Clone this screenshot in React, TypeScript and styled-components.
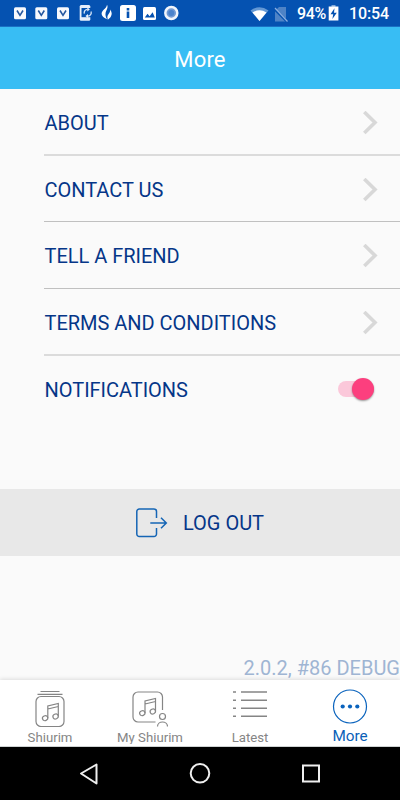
import React, { useState } from "react";
import styled, { createGlobalStyle } from "styled-components";

const Global = createGlobalStyle`
  * { box-sizing: border-box; }
  body { margin: 0; background: #fafafa; font-family: Roboto, sans-serif; }
  svg { display: block; flex: none; }
`;

const Screen = styled.div`
  width: 400px;
  height: 800px;
  display: flex;
  flex-direction: column;
  background: #fafafa;
  overflow: hidden;
`;

const StatusBar = styled.div`
  height: 27px;
  background: #0552b1;
  border-bottom: 1px solid #1a70c4;
  display: flex;
  align-items: center;
  justify-content: space-between;
  color: #fff;
`;

const StatusIcons = styled.div`
  height: 26px;
`;

const Readout = styled.div`
  display: flex;
  align-items: center;
  height: 26px;
  padding: 2px 11px 0 0;
  font-size: 16px;
  font-weight: 500;
  line-height: 26px;
`;

const Percent = styled.span`
  width: 32px;
  padding-left: 1px;
  letter-spacing: -0.3px;
  white-space: nowrap;
`;

const Clock = styled.span`
  width: 40px;
  white-space: nowrap;
  letter-spacing: -0.1px;
`;

const Header = styled.header`
  height: 62px;
  padding-top: 2px;
  background: #38bdf4;
  display: flex;
  align-items: center;
  justify-content: center;
  color: #fff;
  font-size: 22px;
  letter-spacing: 0.2px;
`;

const Menu = styled.ul`
  list-style: none;
  margin: 0;
  padding: 0 0 0 44px;
  height: 400px;
`;

const MenuRow = styled.li<{ $height: number; $line: number }>`
  height: ${(p) => p.$height}px;
  border-bottom: ${(p) => p.$line}px solid ${(p) => (p.$line === 2 ? "#dbdbdb" : "#c0c0c0")};
  display: flex;
  justify-content: space-between;
  padding: 22px 22px 0 0.5px;
`;

const Label = styled.span`
  color: #053688;
  font-size: 20px;
  line-height: 24px;
  letter-spacing: -0.02px;
  white-space: nowrap;
`;

const Toggle = styled.button<{ $on: boolean }>`
  width: 36px;
  height: 16px;
  margin: 3px 4px 0 0;
  padding: 0;
  border: 0;
  border-radius: 8px;
  background: ${(p) => (p.$on ? "#fbc8da" : "#c4c4c4")};
  display: flex;
  align-items: center;
  justify-content: ${(p) => (p.$on ? "flex-end" : "flex-start")};
`;

const Knob = styled.span<{ $on: boolean }>`
  flex: none;
  width: 22px;
  height: 22px;
  border-radius: 50%;
  background: ${(p) => (p.$on ? "#fc3f7e" : "#f1f1f1")};
  box-shadow: 0 1px 2px rgba(0, 0, 0, 0.4);
`;

const LogOut = styled.button`
  width: 100%;
  height: 67px;
  border: 0;
  padding: 0 0 0 136px;
  background: #e8e8e8;
  font-family: inherit;
  display: flex;
  align-items: center;
  gap: 15px;
`;

const Version = styled.div`
  flex: 1;
  display: flex;
  align-items: flex-end;
  justify-content: flex-end;
  color: #9fb5d3;
  font-size: 20px;
  line-height: 24px;
  white-space: nowrap;
`;

const TabBar = styled.nav`
  height: 67px;
  background: #fff;
  border-bottom: 1px solid #cfd3d3;
  box-shadow: 0 -1px 4px rgba(0, 0, 0, 0.12);
  display: grid;
  grid-template-columns: repeat(4, 100px);
`;

const Tab = styled.div`
  display: flex;
  flex-direction: column;
  align-items: center;
  padding-top: 4px;
  height: 64px;
  overflow: hidden;
`;

const TabName = styled.span<{ $active?: boolean }>`
  margin-top: ${(p) => (p.$active ? -1 : 5)}px;
  color: ${(p) => (p.$active ? "#0a5fb8" : "#858585")};
  font-size: ${(p) => (p.$active ? 15.3 : 13.2)}px;
  line-height: ${(p) => (p.$active ? 20 : 12)}px;
  white-space: nowrap;
`;

const NavBar = styled.div`
  height: 53px;
  background: #000;
  display: flex;
  justify-content: center;
`;

const Chevron = () => (
  <svg width="16" height="24" viewBox="0 0 16 24" fill="none" stroke="#d8d8d8" strokeWidth="3.6">
    <path d="M2.3 1 L13 11.500 L2.3 22" />
  </svg>
);

const Notes = () => (
  <>
    <path d="M9.5 23V11L20 8.5V21M9.5 14L20 11.5" />
    <ellipse cx="6.8" cy="23.2" rx="2.7" ry="2.4" transform="rotate(-25 6.8 23.2)" />
    <ellipse cx="17.3" cy="21.5" rx="2.7" ry="2.4" transform="rotate(-25 17.3 21.5)" />
  </>
);

const Notifications = () => (
  <svg width="185" height="26" viewBox="0 0 185 26">
    {[14, 35.3, 57].map((x) => (
      <g key={x}>
        <rect x={x} y="7.2" width="12" height="12" rx="1.5" fill="#f7f9fd" />
        <path d={`M${x + 3} 10.5l3 4.8 3-4.8`} fill="none" stroke="#25579f" strokeWidth="1.6" />
      </g>
    ))}
    <rect x="79.700" y="5" width="10.600" height="15.700" rx="1.500" fill="#e8effa" />
    <path d="M81.500 8h10v9.200h-10z" fill="#0552b1" />
    <path d="M84.300 13.600a3.400 3.400 0 0 1 3.200-4.300M91 11.400a3.400 3.400 0 0 1-3.200 4.700" fill="none" stroke="#d8e6f8" strokeWidth="1.300" />
    <path d="M87.300 7.300l2.500 2.100-2.500 2.100zM88 14l-2.500 2.100 2.500 2.100z" fill="#e8effa" />
    <path d="M107 4.800c1.600 3-.8 5.200-1.400 8-.4 2.300.1 4.400 1.500 6.500-4.200-1.800-6.400-4.300-5.100-7.200 1.200-2.500 4.500-3.800 5-7.300z" fill="#fff" />
    <path d="M110.100 9.600c2 2.700 2 4.800.8 6.800-.7 1.300-2 2.200-3.100 3.300-.8-2.800-.4-4.200.8-5.700 1.100-1.300 1.700-2.500 1.500-4.400z" fill="#fff" />
    <rect x="120" y="5" width="16" height="16" rx="2.500" fill="#fff" />
    <path d="M126.700 8h2.600v2.400h-2.600zM126.700 11.600h2.600v6.500h-2.600z" fill="#0552b1" />
    <rect x="143" y="7" width="13" height="13" rx="1.500" fill="#fff" />
    <path d="M144.800 17.500l2.700-3.700 2.100 2.400 3-4 2.200 5.300z" fill="#0552b1" />
    <circle cx="171.300" cy="13" r="6" fill="#739bd4" stroke="#f1f5fb" strokeWidth="2.500" />
    <circle cx="171.300" cy="13" r="3" fill="#4b83cc" />
  </svg>
);

const Signals = () => (
  <svg width="46" height="24" viewBox="0 0 46 24">
    <path d="M.5 8.500Q9.500 1.800 18.500 8.500L9.500 19z" fill="#6498d4" />
    <path d="M2.500 10.500Q9.500 6 16.500 10.500L9.500 19z" fill="#fff" />
    <path d="M29 5h7v14.500H25V9z" fill="#4e83c6" />
    <path d="M24 6.500L37.500 20" stroke="#0552b1" strokeWidth="2.500" />
    <path d="M25 6l12.500 13.500" stroke="#8cafe0" strokeWidth="1.200" />
  </svg>
);

const Battery = () => (
  <svg width="21" height="22" viewBox="0 0 21 22">
    <path d="M3.500 2h4v2h-4z" fill="#81aadb" />
    <path d="M.7 3.500h9.700V17.500H.7z" fill="#fff" />
    <path d="M6.500 5.200l-4 6h2.700l-.8 4.700 4.400-6.100H6z" fill="#0552b1" />
  </svg>
);

const rows = [
  { name: "ABOUT", height: 67, line: 2 },
  { name: "CONTACT US", height: 66, line: 1 },
  { name: "TELL A FRIEND", height: 67, line: 1 },
  { name: "TERMS AND CONDITIONS", height: 67, line: 2 },
];

export default function App() {
  const [on, setOn] = useState(true);
  return (
    <Screen>
      <Global />
      <StatusBar>
        <StatusIcons>
          <Notifications />
        </StatusIcons>
        <Readout>
          <Signals />
          <Percent>94%</Percent>
          <Battery />
          <Clock>10:54</Clock>
        </Readout>
      </StatusBar>
      <Header>More</Header>
      <Menu>
        {rows.map((r) => (
          <MenuRow key={r.name} $height={r.height} $line={r.line}>
            <Label>{r.name}</Label>
            <Chevron />
          </MenuRow>
        ))}
        <MenuRow $height={67} $line={0}>
          <Label>NOTIFICATIONS</Label>
          <Toggle $on={on} aria-label="Notifications" onClick={() => setOn(!on)}>
            <Knob $on={on} />
          </Toggle>
        </MenuRow>
      </Menu>
      <LogOut>
        <svg width="32" height="30" viewBox="0 0 32 30" fill="none" stroke="#1565b5" strokeWidth="1.500">
          <path d="M20.500 10V3.500a2.500 2.500 0 0 0-2.500-2.500H3.300a2.500 2.500 0 0 0-2.500 2.500v22.500a2.500 2.500 0 0 0 2.500 2.500H18a2.500 2.500 0 0 0 2.500-2.500V20M14.300 15h16M25 9.800l5.300 5.200-5.300 5.200" />
        </svg>
        <Label>LOG OUT</Label>
      </LogOut>
      <Version>2.0.2, #86 DEBUG</Version>
      <TabBar>
        <Tab>
          <svg width="30" height="43" viewBox="0 0 30 43" fill="none" stroke="#858585" strokeWidth="1.200">
            <path d="M5.500 7.500h19M2.500 10.300h25" />
            <rect x="1" y="12.500" width="28" height="30" rx="5" />
            <g transform="translate(3.300 11)"><Notes /></g>
          </svg>
          <TabName>Shiurim</TabName>
        </Tab>
        <Tab>
          <svg width="36" height="43" viewBox="0 0 36 43" fill="none" stroke="#858585" strokeWidth="1.200">
            <path d="M30.500 26V13a5 5 0 0 0-5-5H6a5 5 0 0 0-5 5v20a5 5 0 0 0 5 5h17.500" />
            <g transform="translate(3.500 6)"><Notes /></g>
            <circle cx="30.500" cy="32.500" r="3" />
            <path d="M25.500 42.500c0-6 10-6 10 0" />
          </svg>
          <TabName>My Shiurim</TabName>
        </Tab>
        <Tab>
          <svg width="34" height="43" viewBox="0 0 34 43" fill="none" stroke="#858585" strokeWidth="1.500">
            <path d="M0 8h3M8 8h26M0 16.200h3M8 16.200h26M0 24.300h3M8 24.300h26M0 32.300h3M8 32.300h26" />
          </svg>
          <TabName>Latest</TabName>
        </Tab>
        <Tab>
          <svg width="36" height="43" viewBox="0 0 36 43">
            <circle cx="18" cy="22.500" r="16.500" fill="none" stroke="#0a63bd" strokeWidth="1.200" />
            <circle cx="10.700" cy="22.500" r="2.100" fill="#0a63bd" />
            <circle cx="18" cy="22.500" r="2.100" fill="#0a63bd" />
            <circle cx="25.300" cy="22.500" r="2.100" fill="#0a63bd" />
          </svg>
          <TabName $active>More</TabName>
        </Tab>
      </TabBar>
      <NavBar>
        <svg width="260" height="53" viewBox="0 0 260 53" fill="none" stroke="#efefef" strokeWidth="2">
          <path d="M26.500 17.500v19L11 26.500z" strokeLinejoin="round" />
          <circle cx="130" cy="26.300" r="9.300" />
          <rect x="233" y="18.500" width="16" height="16" />
        </svg>
      </NavBar>
    </Screen>
  );
}
